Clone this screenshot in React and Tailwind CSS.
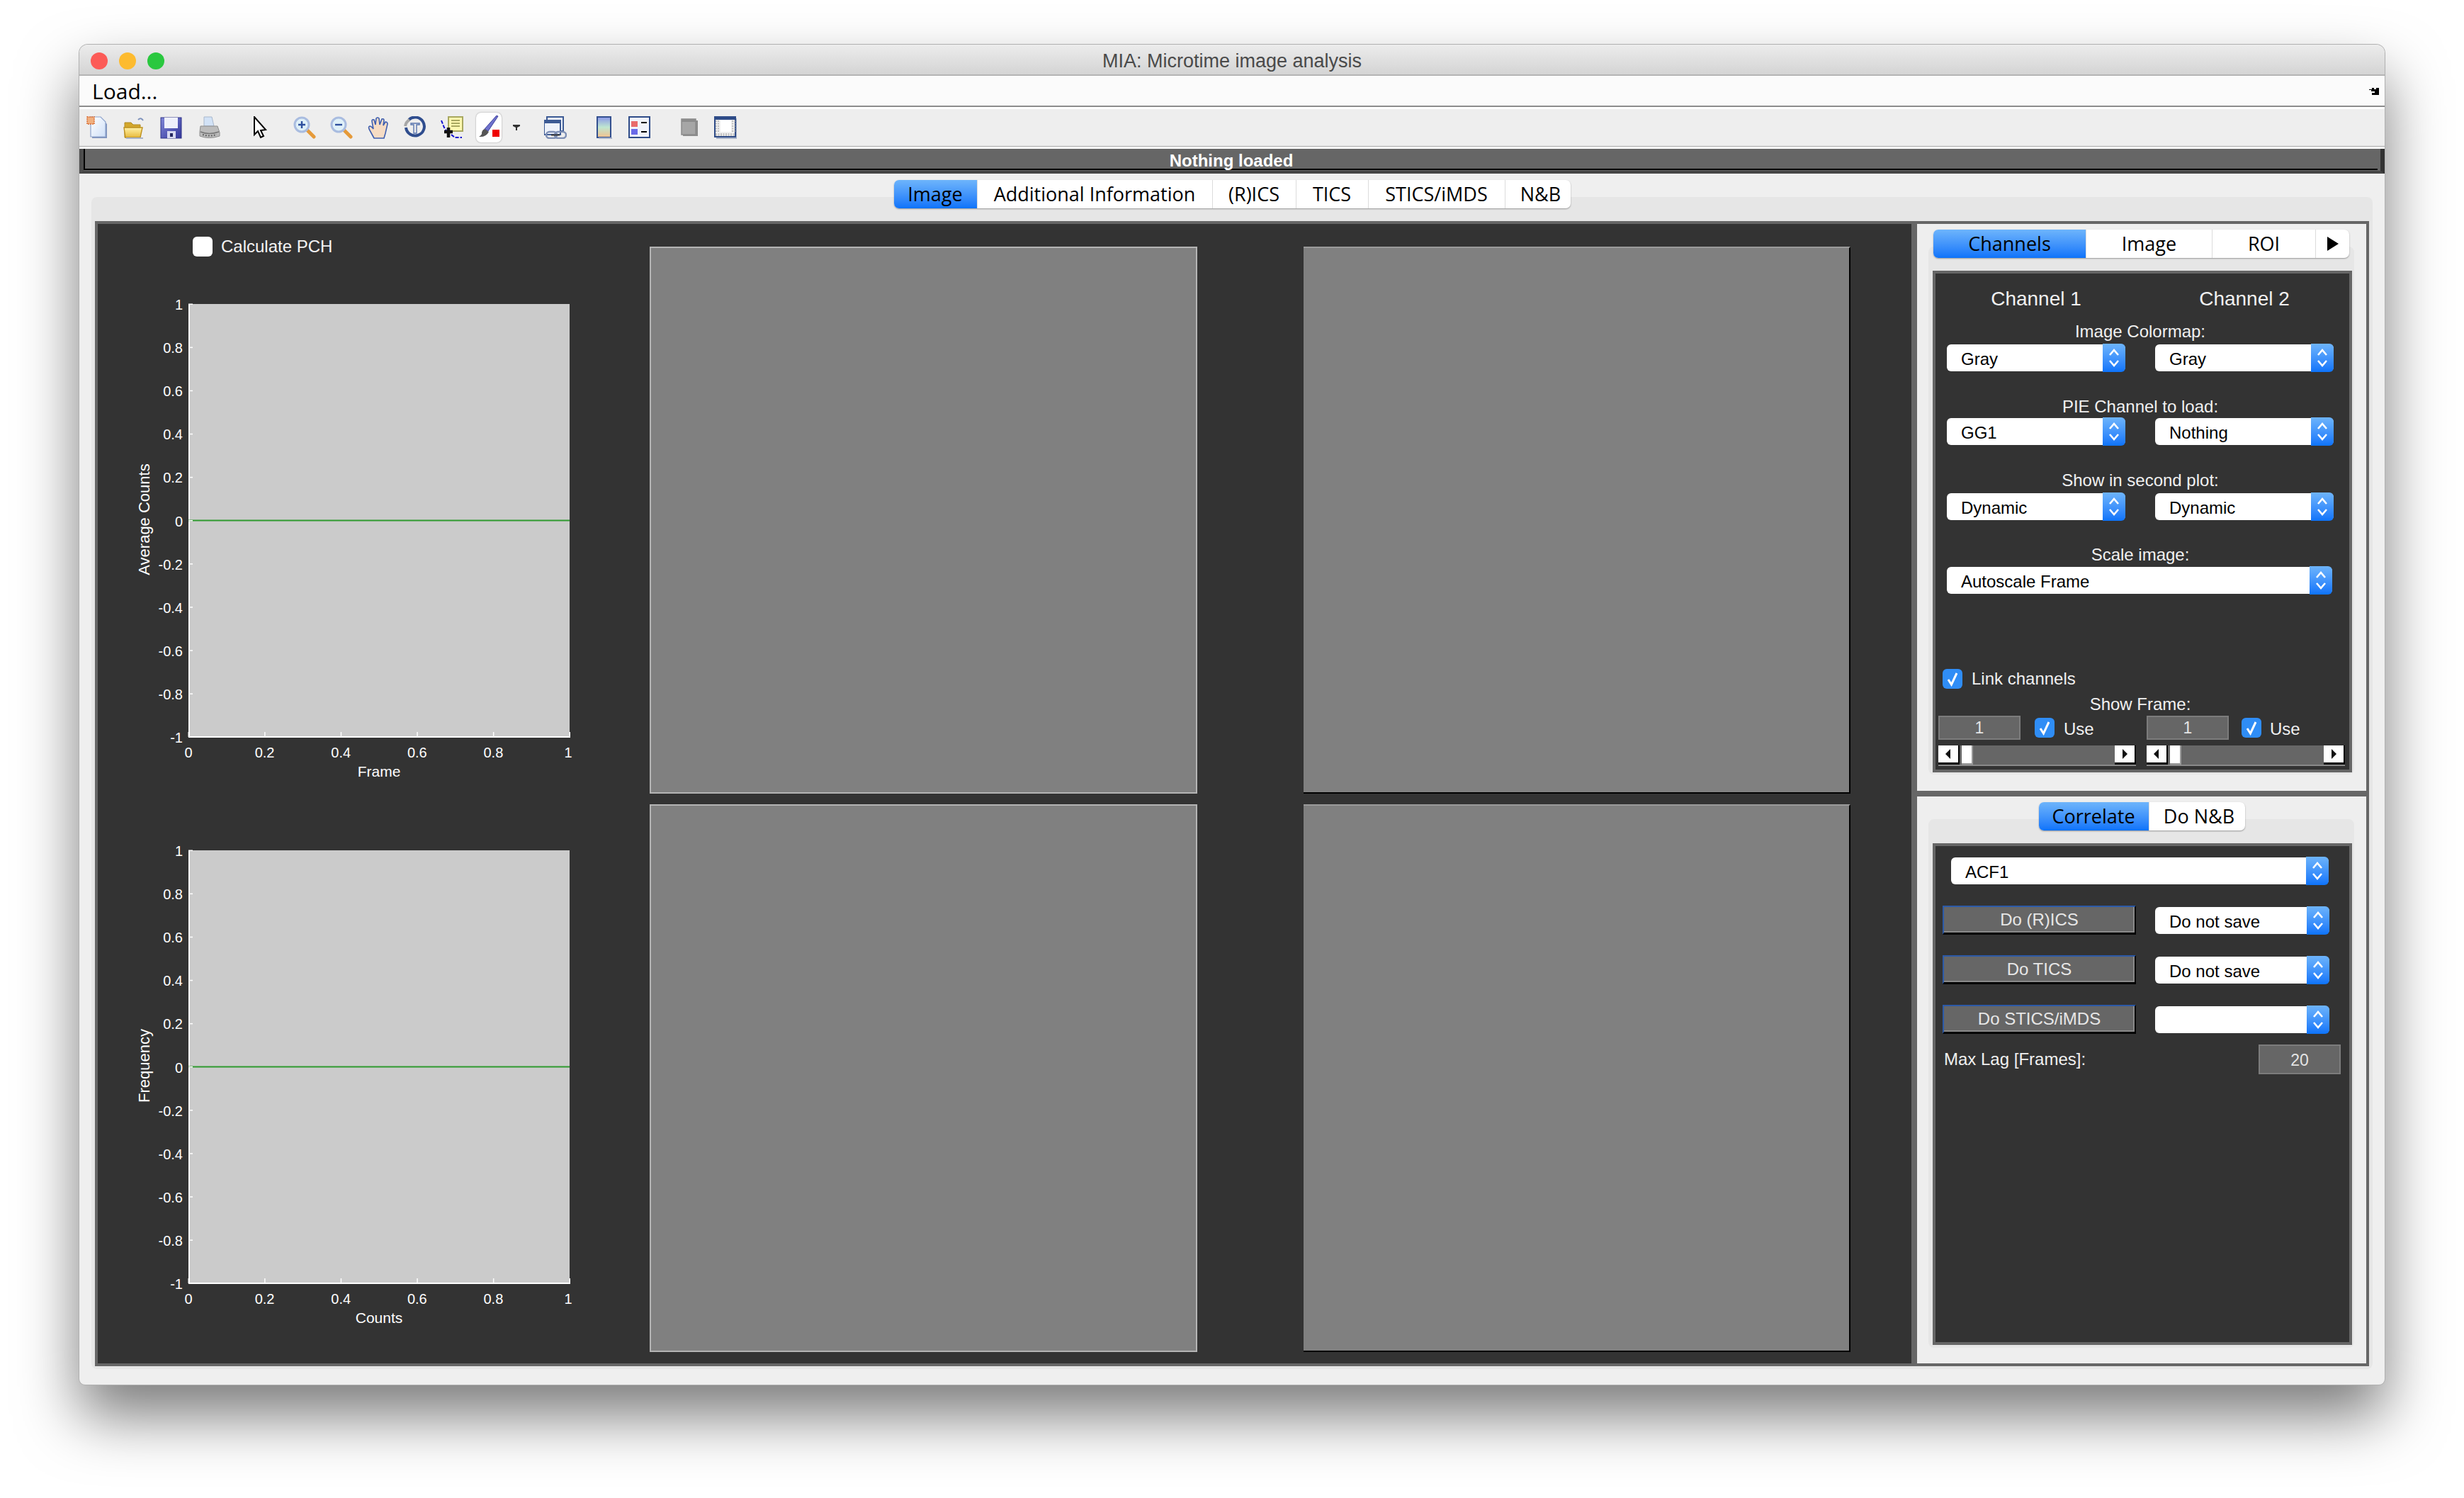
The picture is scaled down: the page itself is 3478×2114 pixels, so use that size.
import React from 'react';

const mainTabs = [
  ['Image', 'w-[117px]'],
  ['Additional Information', 'w-[332px]'],
  ['(R)ICS', 'w-[118px]'],
  ['TICS', 'w-[102px]'],
  ['STICS/iMDS', 'w-[193px]'],
  ['N&B', 'w-[93px] pl-[8px]'],
];
const sideTabs = [
  ['Channels', 'w-[215px]'],
  ['Image', 'w-[178px]'],
  ['ROI', 'w-[146px]'],
  [
    <svg key="more" width="16" height="20" viewBox="0 0 16 20" className="mx-auto mt-[10px] block">
      <path d="M0 0 L16 10 L0 20 Z" fill="black" />
    </svg>,
    'w-[48px]',
  ],
];
const correlateTabs = [
  ['Correlate', 'w-[155px]'],
  ['Do N&B', 'w-[136px] pl-[6px]'],
];

const TabStrip = ({ tabs, className = '' }) => (
  <div className={`relative z-10 flex h-[40px] rounded-[7px] bg-white shadow-[0_1px_2px_rgba(0,0,0,0.35)] font-['Open_Sans',sans-serif] text-[27px] leading-[40px] text-black ${className}`}>
    {tabs.map(([label, width], i) => (
      <div
        key={i}
        className={`${width} text-center ${
          i === 0
            ? 'rounded-l-[7px] bg-gradient-to-b from-[#6db4fb] to-[#0b73fa]'
            : 'border-l border-[#dcdcdc]'
        }`}
      >
        {label}
      </div>
    ))}
  </div>
);

const Select = ({ value, className = '' }) => (
  <div className={`flex h-[38px] rounded-[6px] bg-white ${className}`}>
    <div className="flex-1 pl-[20px] pt-[3px] text-[24px] leading-[36px] text-black">{value}</div>
    <div className="-my-px flex w-[32px] items-center justify-center rounded-r-[6px] bg-gradient-to-b from-[#6db4fb] to-[#0b73fa]">
      <svg width="16" height="30" viewBox="0 0 16 30" fill="none" stroke="white" strokeWidth="2.6">
        <path d="M2 11 L8 4 L14 11" />
        <path d="M2 19 L8 26 L14 19" />
      </svg>
    </div>
  </div>
);

const Check = ({ checked = true }) => (
  <div className={`flex h-[28px] w-[28px] shrink-0 items-center justify-center rounded-[6px] ${checked ? 'bg-[#2f8df6]' : 'bg-white'}`}>
    {checked && (
      <svg width="18" height="22" viewBox="0 0 18 22" fill="none" stroke="white" strokeWidth="3">
        <path d="M3 12 L7.5 19 L15 3" />
      </svg>
    )}
  </div>
);

const NumberBox = ({ value }) => (
  <div className="h-[34px] w-[116px] shrink-0 border-2 border-[#7c7c7c] bg-[#666666] text-center text-[23px] leading-[30px] text-[#e4e4e4]">
    {value}
  </div>
);

const Label = ({ children, className = '' }) => (
  <div className={`h-[28px] text-center text-[24px] leading-[28px] text-[#f0f0f0] ${className}`}>{children}</div>
);

const ScrollButton = ({ dir }) => (
  <div className="flex w-[30px] items-center justify-center border-b-[3px] border-r-[2px] border-black bg-white">
    <svg width="10" height="14" viewBox="0 0 10 14">
      <path d={dir === 'left' ? 'M8 0 V14 L1 7 Z' : 'M2 0 V14 L9 7 Z'} fill="#111" />
    </svg>
  </div>
);

const Slider = ({ className }) => (
  <div className={`flex h-[29px] justify-between border-b-[2px] border-[#8a8a8a] bg-[#666666] ${className}`}>
    <div className="flex">
      <ScrollButton dir="left" />
      <div className="ml-[3px] w-[16px] border-b-[2px] border-r-[2px] border-[#9a9a9a] bg-white" />
    </div>
    <ScrollButton dir="right" />
  </div>
);

const ActionButton = ({ children }) => (
  <div className="h-[41px] w-[273px] shrink-0 border-l-[2px] border-t-[2px] border-b-[3px] border-r-[2px] border-l-[#2c5aa8] border-t-[#2c5aa8] border-b-black border-r-black bg-[#666666] text-center text-[24px] leading-[36px] text-[#e6e6e6] shadow-[inset_-2px_-2px_0_#8a8a8a]">
    {children}
  </div>
);

const yTicks = ['1', '0.8', '0.6', '0.4', '0.2', '0', '-0.2', '-0.4', '-0.6', '-0.8', '-1'];
const xTicks = ['0', '0.2', '0.4', '0.6', '0.8', '1'];

// axes are drawn in one svg, coordinates are local to the left column
const Plot = ({ xLabel, yLabel }) => {
  const left = 128;
  const right = 666;
  const top = 49;
  const bottom = 660;
  const stepY = (bottom - top) / 10;
  const stepX = (right - left) / 5;
  return (
    <svg width="779" height="771" className="block" fill="white">
      <rect x={left} y={top} width={right - left} height={bottom - top} fill="#cbcbcb" />
      <rect x={left} y={top} width="2" height={bottom - top} fill="white" />
      <rect x={left} y={bottom - 1} width={right - left + 1} height="2" fill="white" />
      <rect x={left} y={top + stepY * 5 - 1} width={right - left} height="2" fill="#2f9a2f" />
      {yTicks.map((t, i) => (
        <g key={t}>
          <rect x={left} y={top + stepY * i - 0.5} width="6" height="1.5" fill="white" />
          <text x={left - 8} y={top + stepY * i + 8} fontSize="20" textAnchor="end">{t}</text>
        </g>
      ))}
      {xTicks.map((t, i) => (
        <g key={t}>
          <rect x={left + stepX * i - 0.5} y={bottom - 7} width="1.5" height="7" fill="white" />
          <text x={left + stepX * i - (i === 5 ? 2 : 0)} y={bottom + 29} fontSize="20" textAnchor="middle">{t}</text>
        </g>
      ))}
      <text x="397" y={bottom + 56} fontSize="21" textAnchor="middle">{xLabel}</text>
      <text x="65" y="353" fontSize="22" textAnchor="middle" transform="rotate(-90 65 353)" dominantBaseline="central">{yLabel}</text>
    </svg>
  );
};

const Gradients = () => (
  <svg width="0" height="0" className="absolute">
    <defs>
      <linearGradient id="pageFill" x1="0" y1="0" x2="1" y2="1">
        <stop offset="0" stopColor="#ffffff" />
        <stop offset="1" stopColor="#cfe0f8" />
      </linearGradient>
      <linearGradient id="folderFill" x1="0" y1="0" x2="0" y2="1">
        <stop offset="0" stopColor="#fff2a8" />
        <stop offset="1" stopColor="#e8b93a" />
      </linearGradient>
      <linearGradient id="floppyFill" x1="0" y1="0" x2="1" y2="1">
        <stop offset="0" stopColor="#7f86d8" />
        <stop offset="1" stopColor="#34379a" />
      </linearGradient>
      <linearGradient id="barFill" x1="0" y1="0" x2="0" y2="1">
        <stop offset="0" stopColor="#8a96e8" />
        <stop offset="0.5" stopColor="#bfe6d0" />
        <stop offset="1" stopColor="#f2c08c" />
      </linearGradient>
    </defs>
  </svg>
);

const Icon = ({ children, className = '', w = 32 }) => (
  <svg width={w} height="32" viewBox={`0 0 ${w} 32`} className={`block shrink-0 ${className}`}>
    {children}
  </svg>
);

const Lens = ({ minus }) => (
  <>
    <path d="M19 19 L29 29" stroke="#e59a3a" strokeWidth="5" strokeLinecap="round" />
    <circle cx="12" cy="12" r="10" fill="#dff0f8" stroke="#a9bce0" strokeWidth="3" />
    <path d={minus ? 'M7 12 H17' : 'M7 12 H17 M12 7 V17'} stroke="#2d4f9e" strokeWidth="2.4" />
  </>
);

const Toolbar = () => (
  <div className="flex h-[52px] items-center bg-[#eeeeee] pl-[10px]">
    <Icon>
      <path d="M8 3 H21 L29 11 V31 H8 Z" fill="#7f93bd" />
      <path d="M6 1 H20 L27 8 V29 H6 Z" fill="url(#pageFill)" stroke="#8ea3cc" strokeWidth="1.2" />
      <rect x="1" y="1" width="10" height="10" fill="#f0b080" stroke="#d86a30" strokeWidth="1.4" strokeDasharray="2 1" />
    </Icon>
    <Icon className="ml-[20px]">
      <path d="M21 5 Q25 1 28 6" fill="none" stroke="#7f93bd" strokeWidth="2" />
      <path d="M2 9 H11 L14 12 H24 V30 H2 Z" fill="#d3a72c" stroke="#b08a20" />
      <path d="M1 16 H27 L24 30 H3 Z" fill="url(#folderFill)" stroke="#bd9120" strokeWidth="1.4" />
      <rect x="4" y="30" width="24" height="2" fill="#a9b3c9" />
    </Icon>
    <Icon className="ml-[20px]">
      <rect x="1" y="2" width="29" height="29" fill="url(#floppyFill)" stroke="#2f3388" />
      <rect x="6" y="2" width="19" height="15" fill="#eef0fb" />
      <rect x="10" y="21" width="12" height="10" fill="#d8daf0" />
      <rect x="14" y="24" width="4" height="5" fill="#23265f" />
    </Icon>
    <Icon className="ml-[22px]">
      <path d="M8 1 H19 L22 14 H8 Z" fill="#d2e2f6" stroke="#a9b8cc" />
      <path d="M3 14 H27 L30 23 V28 Q15 33 2 28 V22 Z" fill="#bcbcbc" stroke="#8c8c8c" />
      <path d="M3 22 Q15 27 29 22" fill="none" stroke="#777777" strokeWidth="1.5" />
      <path d="M6 26 Q15 29 26 26" fill="none" stroke="#5f5f5f" strokeWidth="2" strokeDasharray="2 2" />
    </Icon>
    <Icon className="ml-[37px]">
      <path d="M10 1 V26 L15 21 L19 30 L23 28 L19 20 L26 19 Z" fill="white" stroke="black" strokeWidth="2" />
    </Icon>
    <Icon className="ml-[33px]"><Lens /></Icon>
    <Icon className="ml-[20px]"><Lens minus /></Icon>
    <Icon className="ml-[20px]">
      <path d="M10 31 L4 20 Q1 15 4 14 Q6 14 9 18 L7 7 Q7 4 10 5 L12 12 L13 3 Q15 1 17 3 L18 12 L21 4 Q24 3 24 6 L23 13 L26 8 Q29 8 29 11 L26 24 L24 31 Z" fill="#f6dcc4" stroke="#3f5fb0" strokeWidth="1.6" />
    </Icon>
    <Icon className="ml-[20px]" w={32}>
      <path d="M7 5 A13 13 0 1 1 3 16" fill="none" stroke="#2f4d8e" strokeWidth="4" />
      <path d="M2 14 A13 13 0 0 1 8 5" fill="none" stroke="#a7a7a7" strokeWidth="4" />
      <path d="M10 10 H22 V12 H18 V24 H14 V12 H10 Z" fill="none" stroke="#5a76ae" strokeWidth="1.4" />
    </Icon>
    <Icon className="ml-[20px]">
      <rect x="11" y="1" width="20" height="20" fill="#fff8b0" stroke="#a8a860" strokeWidth="2" />
      <path d="M15 6 H27 M15 10 H27 M15 14 H27" stroke="#a8a860" strokeWidth="2" />
      <path d="M1 6 L5 16 L9 22 M15 26 L20 30 H30" fill="none" stroke="#1010d0" strokeWidth="2" strokeDasharray="5 2" />
      <path d="M5 22 H17 M11 16 V30" stroke="#111" strokeWidth="4.5" />
    </Icon>
    <div className="ml-[18px] flex h-[42px] w-[36px] items-center justify-center rounded-[7px] bg-white shadow-[0_0_2px_rgba(0,0,0,0.4)]">
      <svg width="32" height="34" viewBox="0 0 32 34">
        <path d="M29 1 L15 22 L10 19 L27 0 Z" fill="#6f72cc" stroke="#3c3f9c" />
        <path d="M10 19 L16 23 Q12 31 2 30 Q7 27 6 24 Q7 20 10 19 Z" fill="#555555" />
        <rect x="21" y="20" width="10" height="10" fill="#f00000" />
      </svg>
    </div>
    <svg width="10" height="8" viewBox="0 0 10 8" className="ml-[16px] shrink-0">
      <path d="M0 0 H10 V2 L6 4 V8 H4 V4 L0 2 Z" fill="#333333" />
    </svg>
    <Icon className="ml-[34px]">
      <rect x="4" y="1" width="23" height="20" fill="#eef2fa" stroke="#3c5a94" strokeWidth="2" />
      <rect x="0" y="6" width="23" height="20" fill="#eef2fa" stroke="#3c5a94" strokeWidth="2" />
      <rect x="0" y="6" width="23" height="4" fill="#3c5a94" />
      <rect x="3" y="22" width="15" height="9" rx="4.5" fill="none" stroke="#7d8fb5" strokeWidth="2.5" />
      <rect x="15" y="22" width="16" height="9" rx="4.5" fill="none" stroke="#7d8fb5" strokeWidth="2.5" />
      <path d="M10 26.5 H22" stroke="#333" strokeWidth="2" />
    </Icon>
    <Icon className="ml-[37px]" w={32}>
      <rect x="6" y="1" width="19" height="29" fill="url(#barFill)" stroke="#33508f" strokeWidth="2" />
      <rect x="8" y="30" width="19" height="2" fill="#a8b2c8" />
    </Icon>
    <Icon className="ml-[18px]">
      <rect x="1" y="1" width="29" height="29" fill="#f0f3fb" stroke="#2f4c88" strokeWidth="2" />
      <rect x="4" y="7" width="9" height="8" fill="#e86a6a" />
      <rect x="4" y="18" width="9" height="8" fill="#6a6ae8" />
      <path d="M18 9 H26 M18 22 H26" stroke="black" strokeWidth="2" />
    </Icon>
    <Icon className="ml-[42px]" w={24}>
      <rect x="3" y="6" width="21" height="22" fill="#8c8c8c" />
      <rect x="1" y="4" width="20" height="22" fill="#a6a6a6" stroke="#8a8a8a" strokeWidth="1.5" />
      <rect x="1" y="4" width="20" height="4" fill="#8c8c8c" />
    </Icon>
    <Icon className="ml-[23px]">
      <rect x="3" y="3" width="29" height="29" fill="#a7b2c8" />
      <rect x="1" y="1" width="29" height="28" fill="#f0f0f0" stroke="#2f4c88" strokeWidth="2" />
      <rect x="1" y="1" width="29" height="4" fill="#2f4c88" />
      <rect x="9" y="6" width="15" height="16" fill="white" />
      <path d="M3 6 V23 M6 6 V23 M26 6 V23 M29 6 V23 M2 25 H30 M2 27 H30" stroke="#b4b4b4" strokeWidth="1.6" strokeDasharray="2 1.5" />
    </Icon>
  </div>
);

const ImagePane = ({ second }) => (
  <div
    className={`h-full bg-[#808080] ${
      second
        ? 'border-t-[2px] border-r-[2px] border-b-[2px] border-t-[#9a9a9a] border-r-black border-b-black'
        : 'border-[2px] border-[#b4b4b4]'
    }`}
  />
);

const ImageTab = () => (
  <div className="flex h-[1608px] w-[2560px] shrink-0 bg-[#333333] text-[#f4f4f4]">
    <div className="w-[779px] shrink-0 pt-[18px]">
      <div className="flex h-[28px] items-center pl-[134px]">
        <Check checked={false} />
        <span className="ml-[12px] text-[24px] leading-[28px]">Calculate PCH</span>
      </div>
      <div className="mt-[18px]">
        <Plot xLabel="Frame" yLabel="Average Counts" />
        <Plot xLabel="Counts" yLabel="Frequency" />
      </div>
    </div>
    <div className="pt-[32px]">
      <div className="grid grid-cols-[773px_772px] grid-rows-[772px_773px] gap-x-[150px] gap-y-[15px]">
        <ImagePane />
        <ImagePane second />
        <ImagePane />
        <ImagePane second />
      </div>
    </div>
  </div>
);

const ChannelsPanel = () => (
  <div className="h-[708px] w-[592px] border-[4px] border-[#666666] bg-[#333333] pt-[20px] text-[#f0f0f0]">
    <div className="ml-[16px] w-[546px]">
      <div className="grid h-[32px] grid-cols-[252px_252px] gap-x-[42px] text-center text-[28px] leading-[32px]">
        <div>Channel 1</div>
        <div>Channel 2</div>
      </div>
      <Label className="mt-[16px]">Image Colormap:</Label>
      <div className="mt-[4px] grid grid-cols-[252px_252px] gap-x-[42px]">
        <Select value="Gray" />
        <Select value="Gray" />
      </div>
      <Label className="mt-[36px]">PIE Channel to load:</Label>
      <div className="mt-[2px] grid grid-cols-[252px_252px] gap-x-[42px]">
        <Select value="GG1" />
        <Select value="Nothing" />
      </div>
      <Label className="mt-[36px]">Show in second plot:</Label>
      <div className="mt-[4px] grid grid-cols-[252px_252px] gap-x-[42px]">
        <Select value="Dynamic" />
        <Select value="Dynamic" />
      </div>
      <Label className="mt-[35px]">Scale image:</Label>
      <Select value="Autoscale Frame" className="mt-[3px] w-[544px]" />
    </div>
    <div className="ml-[10px] mt-[106px] flex h-[28px] items-center">
      <Check />
      <span className="ml-[13px] text-[24px] leading-[28px]">Link channels</span>
    </div>
    <div className="ml-[16px] w-[546px]">
      <Label className="mt-[8px]">Show Frame:</Label>
    </div>
    <div className="ml-[4px] mt-[2px] flex h-[34px] items-center">
      <NumberBox value="1" />
      <div className="ml-[20px]"><Check /></div>
      <span className="ml-[13px] w-[117px] pt-[4px] text-[24px]">Use</span>
      <NumberBox value="1" />
      <div className="ml-[18px]"><Check /></div>
      <span className="ml-[12px] pt-[4px] text-[24px]">Use</span>
    </div>
    <div className="ml-[4px] mt-[8px] flex gap-x-[15px]">
      <Slider className="w-[279px]" />
      <Slider className="w-[280px]" />
    </div>
  </div>
);

const CorrelatePanel = () => (
  <div className="h-[708px] w-[592px] border-[4px] border-[#666666] bg-[#333333] pt-[16px] text-[#f0f0f0]">
    <Select value="ACF1" className="ml-[22px] w-[533px]" />
    {[['Do (R)ICS', 'Do not save'], ['Do TICS', 'Do not save'], ['Do STICS/iMDS', '']].map(([action, save], i) => (
      <div key={action} className={`ml-[10px] flex ${i === 0 ? 'mt-[30px]' : 'mt-[29px]'}`}>
        <ActionButton>{action}</ActionButton>
        <Select value={save} className="ml-[27px] mt-[2px] w-[246px]" />
      </div>
    ))}
    <div className="ml-[12px] mt-[15px] flex w-[560px] items-center justify-between">
      <span className="text-[24px]">Max Lag [Frames]:</span>
      <div className="h-[42px] w-[116px] border-2 border-[#7c7c7c] bg-[#666666] text-center text-[23px] leading-[40px] text-[#e4e4e4]">20</div>
    </div>
  </div>
);

const SidePanels = () => (
  <div className="flex w-[634px] shrink-0 flex-col gap-y-[8px]">
    <div className="h-[800px] bg-[#eeeeee] pt-[8px]">
      <TabStrip tabs={sideTabs} className="ml-[23px] w-[587px]" />
      <div className="-mt-[16px] ml-[16px] h-[745px] w-[601px] rounded-[8px] bg-[#e6e6e6] pl-[6px] pt-[34px]">
        <ChannelsPanel />
      </div>
    </div>
    <div className="h-[800px] bg-[#eeeeee] pt-[8px]">
      <div className="flex justify-center">
        <TabStrip tabs={correlateTabs} />
      </div>
      <div className="-mt-[16px] ml-[16px] h-[746px] w-[601px] rounded-[8px] bg-[#e6e6e6] pl-[6px] pt-[34px]">
        <CorrelatePanel />
      </div>
    </div>
  </div>
);

export default function App() {
  return (
    <div className="h-[2114px] w-[3478px] overflow-hidden bg-white pl-[112px] pt-[63px] font-['Liberation_Sans',sans-serif]">
      <Gradients />
      <div className="h-[1891px] w-[3254px] rounded-t-[12px] rounded-b-[8px] bg-[#efefef] shadow-[0_0_0_1px_#b0b0b0,0_44px_84px_rgba(0,0,0,0.52)]">
        {/* title bar */}
        <div className="flex h-[44px] items-center rounded-t-[12px] border-b-[2px] border-[#b4b4b4] bg-gradient-to-b from-[#ececec] to-[#d4d4d4] pl-[16px] pt-[3px]">
          <div className="h-[24px] w-[24px] rounded-full bg-[#fc5b57]" />
          <div className="ml-[16px] h-[24px] w-[24px] rounded-full bg-[#fdbb2f]" />
          <div className="ml-[16px] h-[24px] w-[24px] rounded-full bg-[#2ac83f]" />
          <div className="flex-1 pr-[120px] pt-[2px] text-center text-[27px] leading-[37px] text-[#4a4a4a]">MIA: Microtime image analysis</div>
        </div>
        {/* menu */}
        <div className="flex h-[44px] items-center justify-between border-b-[2px] border-[#8c8c8c] bg-[#fbfbfb] pl-[18px] pr-[8px] pt-[1px] font-['Open_Sans',sans-serif] text-[30px] leading-[41px] text-black">
          <span>Load...</span>
          <svg width="14" height="10" viewBox="0 0 14 10">
            <path d="M0 2 H4 V0 H7 V2 H10 V0 H14 V10 H4 V7 H8 V5 H3 V3 H0 Z" fill="black" />
          </svg>
        </div>
        <div className="h-[3px] bg-white" />
        <Toolbar />
        <div className="h-[1px] bg-[#a8a8a8]" />
        <div className="h-[3px] bg-white" />
        {/* status bar */}
        <div className="h-[35px] border-b-[4px] border-l-[6px] border-r-[6px] border-b-[#464646] border-l-[#4d4d4d] border-r-[#333333] bg-[#666666]">
          <div className="mr-[4px] h-[30px] border-b-[2px] border-l-[2px] border-black pt-[6px] text-center text-[24px] font-bold leading-[22px] text-white">
            Nothing loaded
          </div>
        </div>
        <div className="flex justify-center pt-[9px]">
          <TabStrip tabs={mainTabs} />
        </div>
        <div className="mx-[17px] -mt-[16px] h-[1654px] rounded-[8px] bg-[#e6e6e6] pl-[5px] pt-[34px]">
          <div className="flex h-[1616px] w-[3210px] gap-x-[8px] bg-[#666666] p-[4px]">
            <ImageTab />
            <SidePanels />
          </div>
        </div>
      </div>
    </div>
  );
}
